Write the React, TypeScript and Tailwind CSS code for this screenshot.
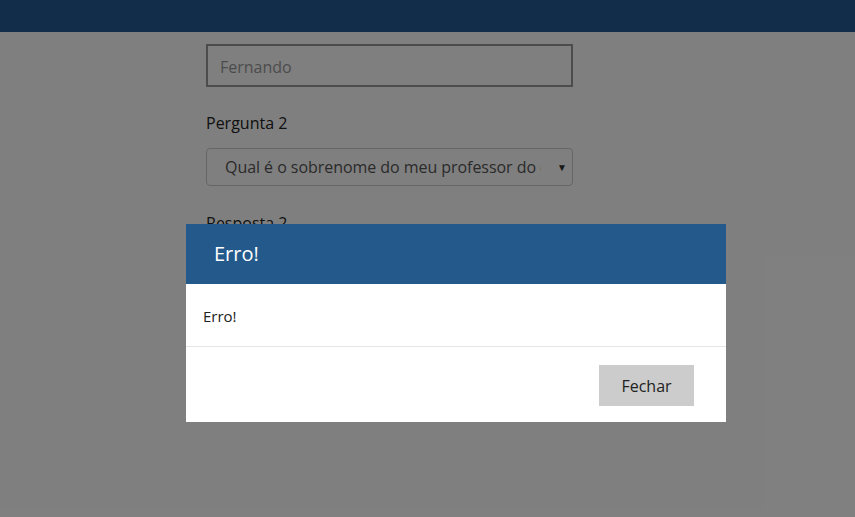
const font = { fontFamily: '"Open Sans", "Noto Sans", sans-serif' };

function SecurityForm() {
  return (
    <div className="min-h-[517px] bg-white" style={font}>
      <header className="h-8 w-full bg-[#255a93]" />
      <main className="ml-[206px] w-[367px] pt-3">
        <input
          readOnly
          placeholder="Fernando"
          className="h-[43px] w-full border-2 border-[#999] px-3 pt-[3px] text-[16px] text-[#555] placeholder:text-[#999]"
        />
        <label className="mt-[24px] block text-[16px] leading-6 text-[#222]">
          Pergunta 2
        </label>
        <div className="relative mt-[13px] flex h-[38px] w-full items-center rounded border border-[#ccc]">
          <span className="w-[334px] overflow-hidden whitespace-nowrap pl-[18px] text-[16px] tracking-[-0.05px] text-[#555]">
            Qual é o sobrenome do meu professor do ensino médio?
          </span>
          <span className="ml-auto mr-[5px] text-[10px] text-[#333]">▼</span>
        </div>
        <label className="mt-[25px] block text-[16px] leading-6 text-[#222]">
          Resposta 2
        </label>
        <input className="mt-3 h-[43px] w-full border border-[#ccc]" readOnly />
      </main>
    </div>
  );
}

function ErrorModal() {
  return (
    <div className="absolute inset-0 bg-black/50" style={font}>
      <div className="ml-[186px] mt-[224px] w-[540px] bg-white">
        <div className="flex h-[60px] items-center bg-[#235a8b] px-7">
          <h4 className="text-[20px] text-white">Erro!</h4>
        </div>
        <div className="flex h-[63px] items-center border-b border-[#e5e5e5] px-[17px] pt-[3px] text-[15px] text-[#222]">
          Erro!
        </div>
        <div className="flex h-[75px] items-center justify-end pr-8 pt-[2px]">
          <button className="h-[41px] w-[95px] bg-[#ccc] text-[16px] text-[#222]">
            Fechar
          </button>
        </div>
      </div>
    </div>
  );
}

export default function App() {
  return (
    <div className="relative h-[517px] w-[855px] overflow-hidden">
      <SecurityForm />
      <ErrorModal />
    </div>
  );
}
